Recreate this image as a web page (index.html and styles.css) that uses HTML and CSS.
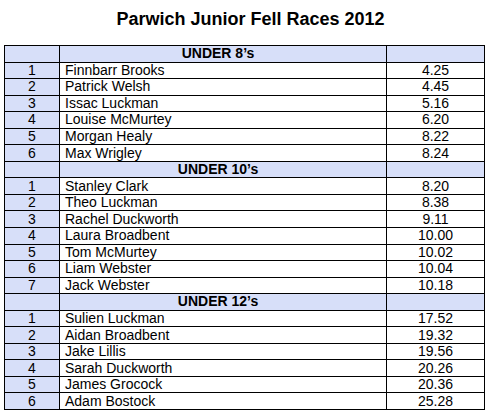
FILE: index.html
```html
<!DOCTYPE html>
<html>
<head>
<meta charset="utf-8">
<link rel="stylesheet" href="styles.css">
</head>
<body>
<div class="page">
  <h1 class="title">Parwich Junior Fell Races 2012</h1>
  <table class="results">
    <colgroup><col class="c-pos"><col class="c-name"><col class="c-time"></colgroup>
    <tbody>
      <tr class="group"><td class="pos"></td><td class="gname">UNDER 8’s</td><td class="gtime"></td></tr>
      <tr><td class="pos">1</td><td class="name">Finnbarr Brooks</td><td class="time">4.25</td></tr>
      <tr><td class="pos">2</td><td class="name">Patrick Welsh</td><td class="time">4.45</td></tr>
      <tr><td class="pos">3</td><td class="name">Issac Luckman</td><td class="time">5.16</td></tr>
      <tr><td class="pos">4</td><td class="name">Louise McMurtey</td><td class="time">6.20</td></tr>
      <tr><td class="pos">5</td><td class="name">Morgan Healy</td><td class="time">8.22</td></tr>
      <tr><td class="pos">6</td><td class="name">Max Wrigley</td><td class="time">8.24</td></tr>
      <tr class="group"><td class="pos"></td><td class="gname">UNDER 10’s</td><td class="gtime"></td></tr>
      <tr><td class="pos">1</td><td class="name">Stanley Clark</td><td class="time">8.20</td></tr>
      <tr><td class="pos">2</td><td class="name">Theo Luckman</td><td class="time">8.38</td></tr>
      <tr><td class="pos">3</td><td class="name">Rachel Duckworth</td><td class="time">9.11</td></tr>
      <tr><td class="pos">4</td><td class="name">Laura Broadbent</td><td class="time">10.00</td></tr>
      <tr><td class="pos">5</td><td class="name">Tom McMurtey</td><td class="time">10.02</td></tr>
      <tr><td class="pos">6</td><td class="name">Liam Webster</td><td class="time">10.04</td></tr>
      <tr><td class="pos">7</td><td class="name">Jack Webster</td><td class="time">10.18</td></tr>
      <tr class="group"><td class="pos"></td><td class="gname">UNDER 12’s</td><td class="gtime"></td></tr>
      <tr><td class="pos">1</td><td class="name">Sulien Luckman</td><td class="time">17.52</td></tr>
      <tr><td class="pos">2</td><td class="name">Aidan Broadbent</td><td class="time">19.32</td></tr>
      <tr><td class="pos">3</td><td class="name">Jake Lillis</td><td class="time">19.56</td></tr>
      <tr><td class="pos">4</td><td class="name">Sarah Duckworth</td><td class="time">20.26</td></tr>
      <tr><td class="pos">5</td><td class="name">James Grocock</td><td class="time">20.36</td></tr>
      <tr><td class="pos">6</td><td class="name">Adam Bostock</td><td class="time">25.28</td></tr>
    </tbody>
  </table>
</div>
</body>
</html>
```

FILE: styles.css
```css
html, body {
  margin: 0;
  padding: 0;
  background: #fff;
}
.page {
  padding: 0 3px 0 4px;
  font-family: "Liberation Sans", Arial, sans-serif;
  color: #000;
}
.title {
  margin: 0;
  height: 45px;
  box-sizing: border-box;
  padding-top: 9px;
  padding-left: 13px;
  font-size: 18px;
  font-weight: bold;
  text-align: center;
  line-height: 20px;
}
.results {
  border-collapse: collapse;
  width: 480px;
  table-layout: fixed;
  font-size: 14px;
}
.c-pos { width: 55px; }
.c-name { width: 327px; }
.c-time { width: 98px; }
.results td {
  border: 1px solid #000;
  height: 15.55px;
  padding: 0;
  line-height: 15px;
  white-space: nowrap;
}
.pos {
  text-align: center;
  background: repeating-conic-gradient(#aebff2 0 25%, #fff 0 50%) 0 0 / 2px 2px;
}
.name {
  padding-left: 5px !important;
}
.time {
  text-align: center;
}
.gname {
  text-align: center;
  font-weight: bold;
  padding-right: 10px !important;
  background: repeating-conic-gradient(#aebff2 0 25%, #fff 0 50%) 0 0 / 2px 2px;
}
.gtime {
  background: repeating-conic-gradient(#aebff2 0 25%, #fff 0 50%) 0 0 / 2px 2px;
}
```
